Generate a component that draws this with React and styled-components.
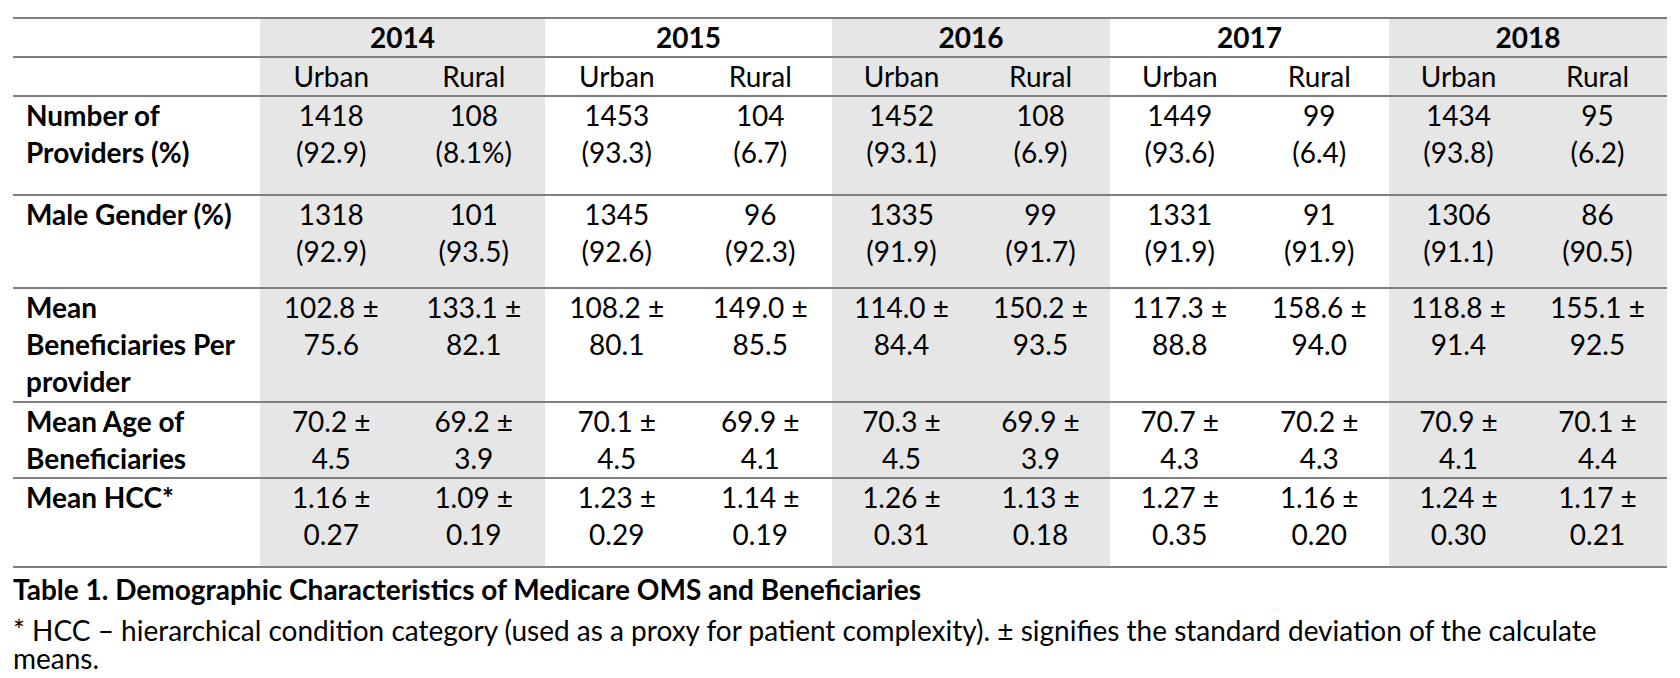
import React from 'react';
import styled, { createGlobalStyle } from 'styled-components';

const GlobalStyle = createGlobalStyle`
  body {
    margin: 0;
    background: #ffffff;
    color: #000000;
    font-family: Lato, 'Liberation Sans', sans-serif;
  }
`;

// page wrapper
const Page = styled.div`
  width: 1654px;
  padding: 17px 13px 0 13px;
`;

const Table = styled.table`
  width: 100%;
  table-layout: fixed;
  border-collapse: collapse;
  font-size: 28px;
  line-height: 37px;
  border-bottom: 2px solid #7f7f7f;
`;

const Row = styled.tr`
  border-top: 2px solid #7f7f7f;
  height: ${(p) => p.$h}px;
`;

const Cell = styled.td`
  background: ${(p) => (p.$shade ? '#e6e6e6' : 'transparent')};
  font-weight: ${(p) => (p.$bold ? 700 : 400)};
  text-align: center;
  vertical-align: top;
  padding: 0;
`;

const LabelCell = styled.td`
  font-weight: 700;
  text-align: left;
  vertical-align: top;
  padding: 0 0 0 13px;
  white-space: nowrap;
`;

const Line = styled.span`
  display: block;
  white-space: nowrap;
`;

const Caption = styled.div`
  font-size: 28px;
  font-weight: 700;
  line-height: 37px;
  margin-top: 3px;
  margin-bottom: 8px;
`;

const Note = styled.div`
  font-size: 28px;
  line-height: 28px;
`;

const years = ['2014', '2015', '2016', '2017', '2018'];
const groupWidths = [285, 287, 278, 279, 278];

const rows = [
  {
    label: ['Number of', 'Providers (%)'],
    h: 99,
    values: [
      ['1418', '(92.9)'], ['108', '(8.1%)'],
      ['1453', '(93.3)'], ['104', '(6.7)'],
      ['1452', '(93.1)'], ['108', '(6.9)'],
      ['1449', '(93.6)'], ['99', '(6.4)'],
      ['1434', '(93.8)'], ['95', '(6.2)'],
    ],
  },
  {
    label: ['Male Gender (%)'],
    h: 93,
    values: [
      ['1318', '(92.9)'], ['101', '(93.5)'],
      ['1345', '(92.6)'], ['96', '(92.3)'],
      ['1335', '(91.9)'], ['99', '(91.7)'],
      ['1331', '(91.9)'], ['91', '(91.9)'],
      ['1306', '(91.1)'], ['86', '(90.5)'],
    ],
  },
  {
    label: ['Mean', 'Beneficiaries Per', 'provider'],
    h: 114,
    values: [
      ['102.8 ±', '75.6'], ['133.1 ±', '82.1'],
      ['108.2 ±', '80.1'], ['149.0 ±', '85.5'],
      ['114.0 ±', '84.4'], ['150.2 ±', '93.5'],
      ['117.3 ±', '88.8'], ['158.6 ±', '94.0'],
      ['118.8 ±', '91.4'], ['155.1 ±', '92.5'],
    ],
  },
  {
    label: ['Mean Age of', 'Beneficiaries'],
    h: 75,
    values: [
      ['70.2 ±', '4.5'], ['69.2 ±', '3.9'],
      ['70.1 ±', '4.5'], ['69.9 ±', '4.1'],
      ['70.3 ±', '4.5'], ['69.9 ±', '3.9'],
      ['70.7 ±', '4.3'], ['70.2 ±', '4.3'],
      ['70.9 ±', '4.1'], ['70.1 ±', '4.4'],
    ],
  },
  {
    label: ['Mean HCC*'],
    h: 89,
    values: [
      ['1.16 ±', '0.27'], ['1.09 ±', '0.19'],
      ['1.23 ±', '0.29'], ['1.14 ±', '0.19'],
      ['1.26 ±', '0.31'], ['1.13 ±', '0.18'],
      ['1.27 ±', '0.35'], ['1.16 ±', '0.20'],
      ['1.24 ±', '0.30'], ['1.17 ±', '0.21'],
    ],
  },
];

const shaded = (col) => Math.floor(col / 2) % 2 === 0;

function App() {
  return (
    <Page>
      <GlobalStyle />
      <Table>
        <colgroup>
          <col style={{ width: 247 }} />
          {groupWidths.map((w, i) => (
            <React.Fragment key={i}>
              <col style={{ width: w / 2 }} />
              <col style={{ width: w / 2 }} />
            </React.Fragment>
          ))}
        </colgroup>
        <tbody>
          <Row $h={38}>
            <Cell />
            {years.map((y, i) => (
              <Cell key={y} colSpan={2} $bold $shade={i % 2 === 0}>
                {y}
              </Cell>
            ))}
          </Row>
          <Row $h={38}>
            <Cell />
            {years.map((y, i) => (
              <React.Fragment key={y}>
                <Cell $shade={i % 2 === 0}>Urban</Cell>
                <Cell $shade={i % 2 === 0}>Rural</Cell>
              </React.Fragment>
            ))}
          </Row>
          {rows.map((r) => (
            <Row key={r.label.join(' ')} $h={r.h}>
              <LabelCell>
                {r.label.map((l) => (
                  <Line key={l}>{l}</Line>
                ))}
              </LabelCell>
              {r.values.map((v, c) => (
                <Cell key={c} $shade={shaded(c)}>
                  <Line>{v[0]}</Line>
                  <Line>{v[1]}</Line>
                </Cell>
              ))}
            </Row>
          ))}
        </tbody>
      </Table>
      <Caption>Table 1. Demographic Characteristics of Medicare OMS and Beneficiaries</Caption>
      <Note>
        * HCC – hierarchical condition category (used as a proxy for patient complexity). ± signifies the standard
        deviation of the calculate means.
      </Note>
    </Page>
  );
}

export default App;
